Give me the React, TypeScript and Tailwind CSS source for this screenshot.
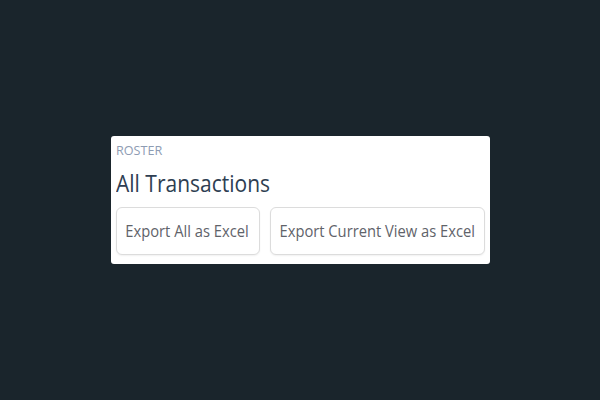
export default function App() {
  return (
    <main className="w-[600px] h-[400px] bg-[#1a252c] flex items-center justify-center font-['Open_Sans',sans-serif]">
      <div className="w-[379px] bg-white rounded-[3px] px-[5px] pt-[5px] pb-[9px]">
        <div className="text-[13px] leading-[18px] font-medium text-[#8e9cb3]">
          <span className="inline-block origin-left scale-x-[0.97]">ROSTER</span>
        </div>
        <h1 className="mt-[8px] text-[24px] leading-[32px] font-medium text-[#2e3e52]">
          <span className="inline-block origin-left scale-x-[0.875]">All Transactions</span>
        </h1>
        <div className="mt-[8px] flex gap-[10px]">
          <button className="w-[144px] h-[48px] flex items-center justify-center rounded-[6px] border border-[#dcdcdc] bg-white text-[16px] font-medium whitespace-nowrap text-[#5f636a] shadow-[0_1px_2px_rgba(0,0,0,0.06)]">
            <span className="inline-block scale-x-[0.92]">Export All as Excel</span>
          </button>
          <button className="w-[215px] h-[48px] flex items-center justify-center rounded-[6px] border border-[#dcdcdc] bg-white text-[16px] font-medium whitespace-nowrap text-[#5f636a] shadow-[0_1px_2px_rgba(0,0,0,0.06)]">
            <span className="inline-block scale-x-[0.92]">Export Current View as Excel</span>
          </button>
        </div>
      </div>
    </main>
  );
}
